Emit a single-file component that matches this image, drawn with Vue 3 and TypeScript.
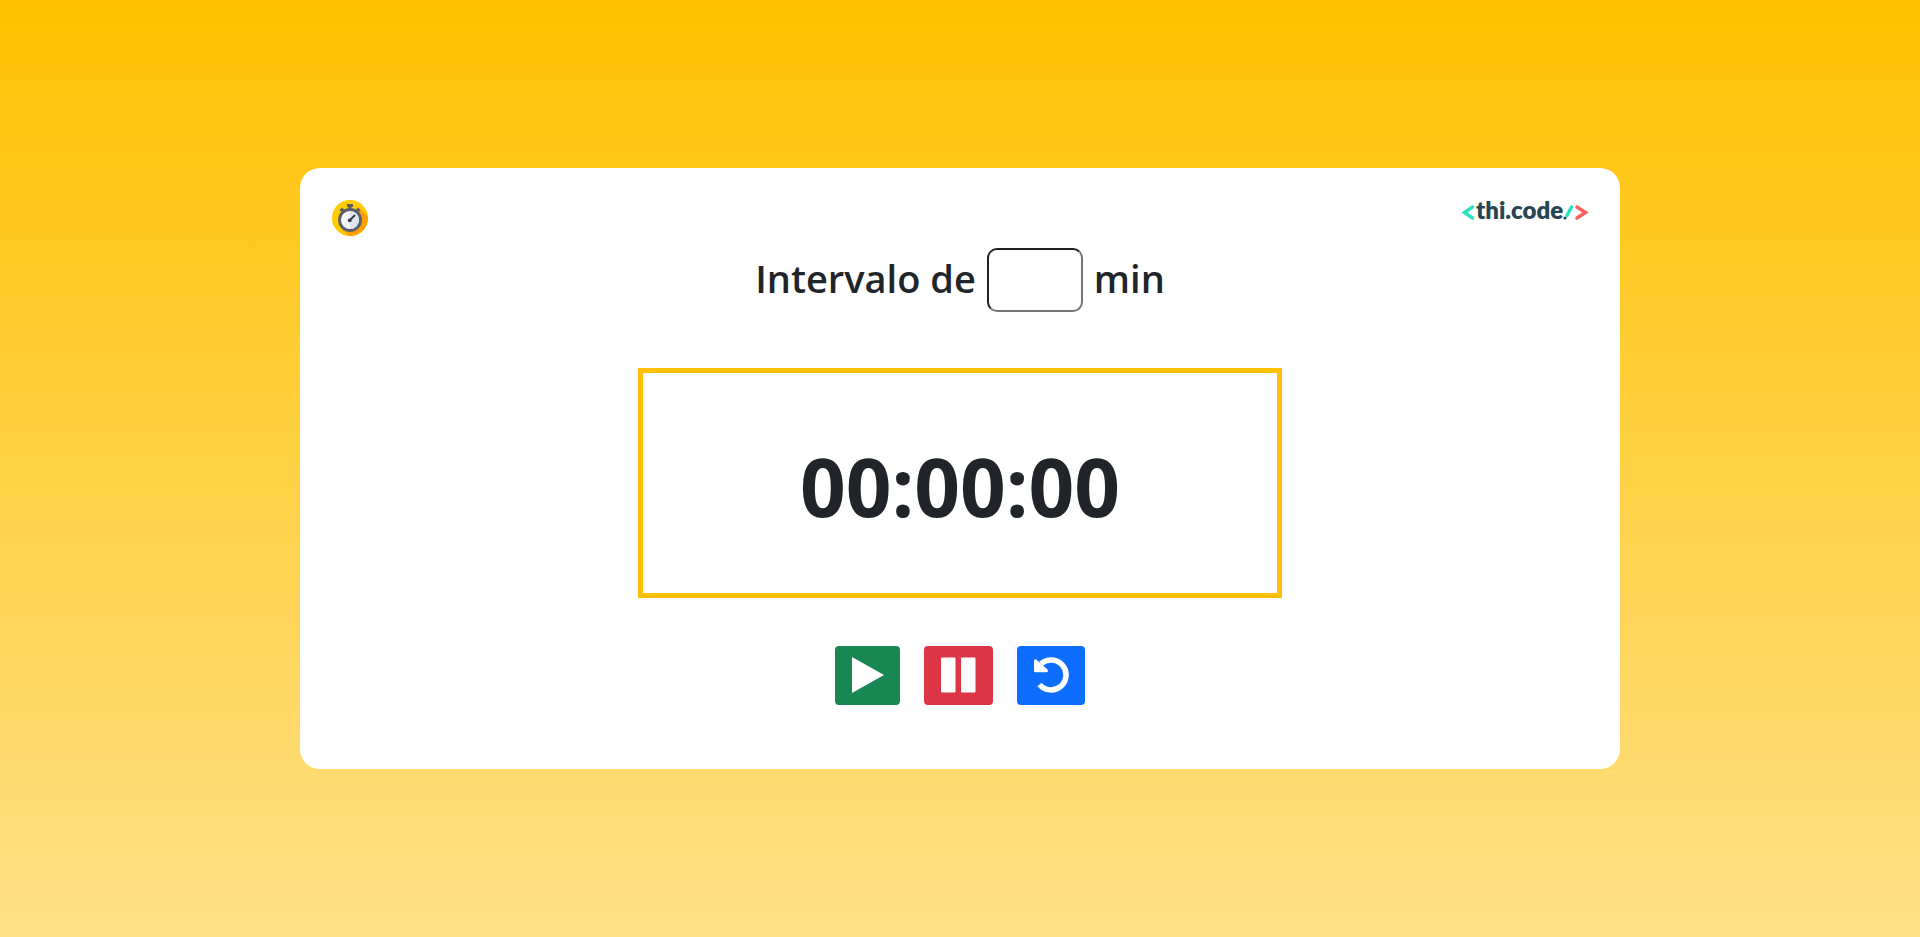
<script setup lang="ts">
import { computed, onBeforeUnmount, ref } from 'vue'

const minutes = ref('')
const elapsed = ref(0)
let timer: number | undefined

const pad = (n: number): string => String(n).padStart(2, '0')

const display = computed(() => {
  const s = elapsed.value
  return [Math.floor(s / 3600), Math.floor(s / 60) % 60, s % 60].map(pad).join(':')
})

function pause(): void {
  window.clearInterval(timer)
  timer = undefined
}

function play(): void {
  if (timer !== undefined) return
  timer = window.setInterval(() => {
    elapsed.value++
    const limit = Number(minutes.value) * 60
    if (limit > 0 && elapsed.value >= limit) pause()
  }, 1000)
}

function reset(): void {
  pause()
  elapsed.value = 0
}

onBeforeUnmount(pause)
</script>

<template>
  <main class="page">
    <section class="card">
      <header class="top">
        <svg class="watch" viewBox="0 0 36 36" aria-hidden="true">
          <defs>
            <clipPath id="disc"><circle cx="18" cy="18" r="18" /></clipPath>
          </defs>
          <circle cx="18" cy="18" r="18" fill="#ffcd00" />
          <path d="M27 8 40 20V40H20L10 29Z" fill="#ff9f00" clip-path="url(#disc)" />
          <path d="M15 4h6v3h-1.500v3h-3V7H15z" fill="#5d5e6b" />
          <path d="M7.500 10 10 7.500l3 3-2.500 2.500zM28.500 10 26 7.500l-3 3 2.500 2.500z" fill="#5d5e6b" />
          <circle cx="18" cy="20" r="10.500" fill="#f3f6fb" stroke="#5d5e6b" stroke-width="2.800" />
          <path d="M18 11a9 9 0 0 1 0 18z" fill="#dfe5f1" />
          <path d="m18 20 4.500-4.500" stroke="#3b3c48" stroke-width="1.800" stroke-linecap="round" />
          <circle cx="17.700" cy="20.300" r="1.900" fill="#3b3c48" />
        </svg>
        <a class="brand" href="#" aria-label="thi.code">
          <svg class="logo" viewBox="0 0 126 30" aria-hidden="true">
            <path d="M10.500 7 2.500 12.500 10.500 18" class="teal" />
            <text x="14" y="19">thi.code</text>
            <circle cx="103" cy="18" r="1.600" fill="#264653" />
            <path d="m105 15.500 4.500-8.500" class="teal" />
            <path d="m115 7 8.500 5.500-8.500 5.500" class="coral" />
          </svg>
        </a>
      </header>

      <h1 class="interval">
        <label for="minutes">Intervalo de</label>
        <input id="minutes" v-model="minutes" type="text" inputmode="numeric" />
        <span>min</span>
      </h1>

      <div class="clock" role="timer">{{ display }}</div>

      <div class="controls">
        <button class="play" type="button" aria-label="Iniciar" @click="play">
          <svg viewBox="0 0 33 36"><path d="M1 0 33 18 1 36z" /></svg>
        </button>
        <button class="pause" type="button" aria-label="Pausar" @click="pause">
          <svg viewBox="0 0 37 36"><path d="M2 .500h12.500q1 0 1 1v33q0 1-1 1H2q-1 0-1-1v-33q0-1 1-1zM22 .500h12.500q1 0 1 1v33q0 1-1 1H22q-1 0-1-1v-33q0-1 1-1z" /></svg>
        </button>
        <button class="reset" type="button" aria-label="Reiniciar" @click="reset">
          <svg viewBox="0 0 36 36">
            <path d="M8 6.800A15 15 0 1 1 6.500 27.500" class="arc" />
            <path d="M1 3.700Q1 2.200 2.500 2.200 3.500 2.200 4 3.200L14.500 12.500q1.200 2.700-1 2.700H2.500Q1 15.200 1 13.700z" />
          </svg>
        </button>
      </div>
    </section>
  </main>
</template>

<style>
body {
  margin: 0;
}
</style>

<style scoped>
.page {
  box-sizing: border-box;
  min-height: 100vh;
  display: flex;
  align-items: center;
  justify-content: center;
  background: linear-gradient(#ffc100, #ffe188);
  color: #212529;
  font-family: "Segoe UI", "Open Sans", "Noto Sans", sans-serif;
}

.card {
  box-sizing: border-box;
  width: 100%;
  max-width: 1320px;
  padding: 32px 32px 64px;
  border-radius: 20px;
  background: #fff;
  display: flex;
  flex-direction: column;
  align-items: center;
}

.top {
  width: 100%;
  display: flex;
  justify-content: space-between;
  align-items: flex-start;
}

.watch {
  display: block;
  width: 36px;
  height: 36px;
}

.brand,
.logo {
  display: block;
}

.logo {
  width: 126px;
  height: 30px;
  overflow: visible;
}

.logo text {
  font: 800 24px Lato, sans-serif;
  fill: #264653;
}

.teal,
.coral {
  fill: none;
  stroke: #2de0c0;
  stroke-width: 3.500;
  stroke-linecap: round;
}

.coral {
  stroke: #ff5f5f;
}

.interval {
  display: flex;
  align-items: center;
  gap: 11px;
  margin: 12px 0 56px;
  font-size: 38px;
  line-height: 48px;
  font-weight: 600;
}

.interval label,
.interval span {
  padding-bottom: 4px;
}

.interval input {
  box-sizing: border-box;
  width: 96px;
  height: 64px;
  padding: 0 8px;
  border: 2px inset #767676;
  border-radius: 10px;
  background: #fff;
  color: inherit;
  font: inherit;
  text-align: center;
}

.clock {
  box-sizing: border-box;
  width: 100%;
  max-width: 644px;
  padding: 63px 16px 57px;
  border: 5px solid #ffc107;
  font-size: 80px;
  line-height: 100px;
  font-weight: 700;
  text-align: center;
}

.controls {
  display: flex;
  gap: 24px;
  margin-top: 48px;
}

.controls button {
  display: block;
  padding: 11px 16px 12px;
  border: 0;
  border-radius: 4px;
  cursor: pointer;
}

.controls svg {
  display: block;
  height: 36px;
  fill: #fff;
}

.controls .arc {
  fill: none;
  stroke: #fff;
  stroke-width: 5.500;
}

.play {
  background: #198754;
}

.pause {
  background: #dc3545;
}

.reset {
  background: #0d6efd;
}
</style>
